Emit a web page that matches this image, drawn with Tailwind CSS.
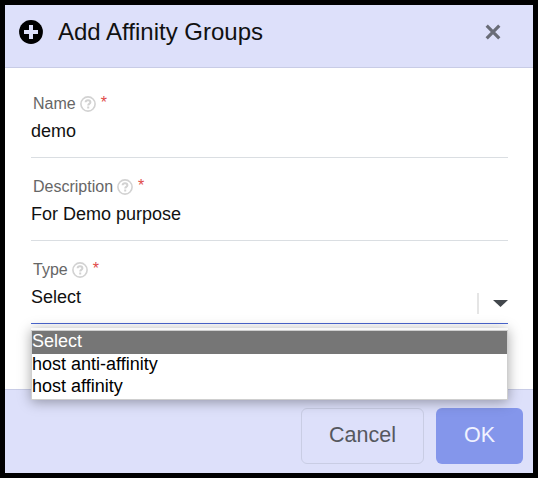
<!DOCTYPE html>
<html lang="en">
<head>
<meta charset="utf-8">
<title>Add Affinity Groups</title>
<script src="https://cdn.jsdelivr.net/npm/@tailwindcss/browser@4"></script>
</head>
<body class="h-[478px] w-[538px] overflow-hidden bg-black p-[5px] font-['Liberation_Sans',Arial,sans-serif]">
<div class="flex h-[468px] w-[528px] flex-col bg-white">
  <header class="flex h-[63px] shrink-0 items-center border-b border-[#c8cce6] bg-[#dde0fa] pr-[32px] pb-[8px] pl-[14px]">
    <svg class="size-6 shrink-0" viewBox="0 0 24 24"><circle cx="12" cy="12" r="11.9" fill="#000"/><path d="M12 5v14M5 12h14" stroke="#dde0fa" stroke-width="4"/></svg>
    <h1 class="ml-[15px] flex-1 text-[24px] leading-[28px] whitespace-nowrap text-[#111]">Add Affinity Groups</h1>
    <svg class="size-4" viewBox="0 0 16 16"><path d="M1.7 1.7l12.6 12.6M14.3 1.7L1.7 14.3" stroke="#696c77" stroke-width="3.2"/></svg>
  </header>
  <main class="flex flex-1 flex-col px-[25px] pt-[26px] pl-[26px]">
    <section class="h-[64px] shrink-0 border-b border-[#dadee2]">
      <div class="flex h-5 items-center pl-[2px] text-[16px] text-[#666]">Name
        <svg class="mb-px ml-[4px] size-4" viewBox="0 0 16 16" fill="none" stroke="#d2d2d2"><circle cx="8" cy="8" r="7.1" stroke-width="1.6"/><path d="M5.6 6.3C5.7 4.8 6.7 4.3 8 4.3c1.4 0 2.4.8 2.4 2 0 1.6-2.2 1.6-2.2 3.1M8.2 10.6v1.8" stroke-width="2"/></svg>
        <span class="mb-[2px] ml-[5px] text-[#e04a48]">*</span></div>
      <div class="mt-[6px] text-[18px] leading-[22px] text-[#111]">demo</div>
    </section>
    <section class="mt-[19px] h-[64px] shrink-0 border-b border-[#dadee2]">
      <div class="flex h-5 items-center pl-[2px] text-[16px] text-[#666]">Description
        <svg class="mb-px ml-[4px] size-4" viewBox="0 0 16 16" fill="none" stroke="#d2d2d2"><circle cx="8" cy="8" r="7.1" stroke-width="1.6"/><path d="M5.6 6.3C5.7 4.8 6.7 4.3 8 4.3c1.4 0 2.4.8 2.4 2 0 1.6-2.2 1.6-2.2 3.1M8.2 10.6v1.8" stroke-width="2"/></svg>
        <span class="mb-[2px] ml-[5px] text-[#e04a48]">*</span></div>
      <div class="mt-[6px] text-[18px] leading-[22px] text-[#111]">For Demo purpose</div>
    </section>
    <section class="relative mt-[19px] h-[64px] shrink-0 border-b border-[#4a66d0]">
      <div class="flex h-5 items-center pl-[2px] text-[16px] text-[#666]">Type
        <svg class="mb-px ml-[4px] size-4" viewBox="0 0 16 16" fill="none" stroke="#d2d2d2"><circle cx="8" cy="8" r="7.1" stroke-width="1.6"/><path d="M5.6 6.3C5.7 4.8 6.7 4.3 8 4.3c1.4 0 2.4.8 2.4 2 0 1.6-2.2 1.6-2.2 3.1M8.2 10.6v1.8" stroke-width="2"/></svg>
        <span class="mb-[2px] ml-[5px] text-[#e04a48]">*</span></div>
      <div class="mt-[6px] flex h-[34px] justify-between">
        <div class="text-[18px] leading-[22px] text-[#111]">Select</div>
        <div class="mt-[7px] flex h-[21px] items-center border-l-2 border-[#e5e5e5] pl-[14px]">
          <svg class="h-[7px] w-[15px]" viewBox="0 0 15 7"><path d="M0 0h15L7.5 7z" fill="#42474c"/></svg>
        </div>
      </div>
      <div class="absolute top-[68px] left-0 z-10 w-[477px] border-t-2 border-[#f8f8f8] shadow-[0_2px_12px_rgba(0,0,0,0.35)]">
        <ul class="h-[70px] border border-[#cfcfcf] bg-white text-[18px] text-black">
          <li class="h-[23px] bg-[#767676] leading-[21px] text-white">Select</li>
          <li class="h-[22px] leading-[21px]">host anti-affinity</li>
          <li class="h-[22px] leading-[21px]">host affinity</li>
        </ul>
      </div>
    </section>
  </main>
  <footer class="flex h-[84px] shrink-0 justify-end gap-3 border-t border-[#c8cce6] bg-[#dde0fa] pt-[18px] pr-[10px]">
    <button class="h-14 w-[123px] rounded-[6px] border border-[#c9cde4] pb-px text-[21.5px] text-[#55585f]">Cancel</button>
    <button class="h-14 w-[87px] rounded-[6px] bg-[#8496eb] pb-px text-[21.5px] text-[#f0f2ff]">OK</button>
  </footer>
</div>
</body>
</html>
